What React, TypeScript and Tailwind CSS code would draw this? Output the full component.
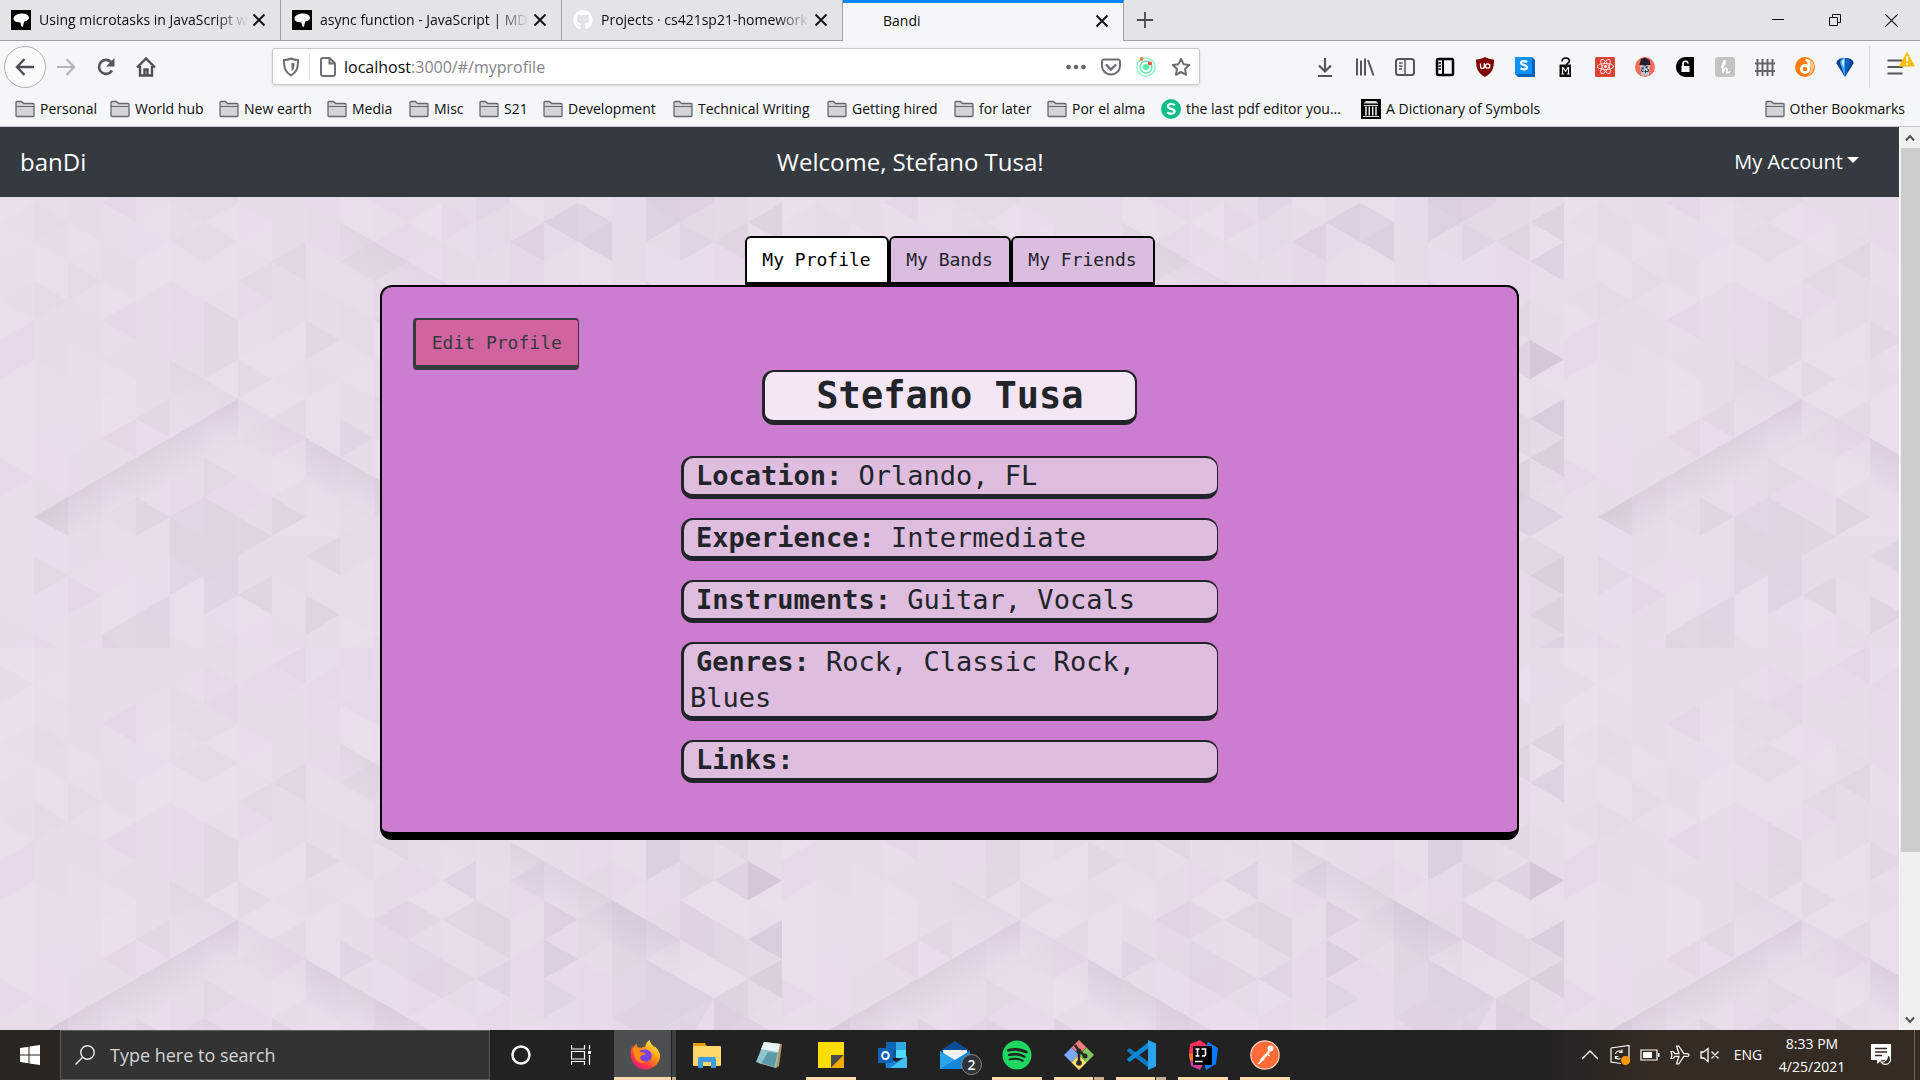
import { useState } from "react";
import type { ReactNode } from "react";
import { FaGithub, FaReact, FaRecycle, FaSpotify } from "react-icons/fa";

/* ---------- triangle wallpaper ---------- */

const TILE_W = 782;
const TILE_H = 521;
const COL = 34;
const HALF = 19.63;

const px = (k: number) => k * COL;
const py = (j: number) => j * HALF - 22.6;

type Facet = [number, number[]];

// Each facet is a depth followed by column/row grid pairs.
const FACETS: Facet[] = [
  [2, [2, 8, 3, 9, 2, 10]],
  [1, [1, 9, 2, 10, 1, 11]],
  [3, [6, 10, 7, 11, 7, 13, 6, 14]],
  [3, [7, 9, 8, 8, 8, 10]],
  [3, [8, 8, 9, 7, 9, 9]],
  [2, [3, 11, 4, 10, 4, 12]],
  [2, [7, 13, 8, 14, 7, 15]],
  [3, [4, 16, 5, 15, 5, 17]],
  [2, [3, 17, 4, 16, 4, 18]],
  [3, [8, 16, 9, 15, 9, 17]],
  [2, [0, 18, 1, 19, 0, 20]],
  [2, [0, 12, 1, 11, 1, 13, 0, 14]],
  [4, [1, 21, 2, 20, 2, 22]],
  [3, [6, 18, 7, 19, 6, 20]],
  [4, [4, 20, 5, 21, 4, 22]],
  [4, [5, 21, 6, 20, 8, 22, 5, 25]],
  [5, [8, 20, 9, 21, 8, 22]],
  [3, [1, 23, 2, 24, 1, 25]],
  [2, [2, 24, 3, 25, 2, 26]],
  [5, [7, 25, 8, 24, 8, 26]],
  [4, [6, 24, 7, 23, 7, 25, 6, 26]],
  [5, [9, 25, 10, 26, 9, 27]],
  [4, [9, 23, 10, 22, 10, 24]],
  [4, [4, 26, 5, 25, 5, 29, 4, 29]],
  [4, [3, 27, 4, 26, 4, 29, 3, 29]],
  [2, [1, 27, 2, 28, 2, 29, 1, 29]],
  [6, [22, 8, 23, 7, 23, 9]],
  [5, [22, 6, 21, 7, 22, 8]],
  [3, [22, 6, 23, 5, 23, 7]],
  [6, [22, 12, 23, 13, 22, 14]],
  [6, [22, 16, 23, 15, 23, 17]],
  [6, [22, 18, 23, 17, 23, 19]],
  [5, [21, 19, 22, 18, 22, 20, 21, 21]],
  [4, [21, 21, 22, 20, 23, 21, 22, 22]],
  [6, [22, 24, 23, 23, 23, 25]],
  [4, [21, 23, 22, 22, 23, 23, 22, 24]],
  [4, [22, 26, 23, 25, 23, 27]],
  [6, [22, 28, 23, 27, 23, 29]],
  [3, [21, 11, 22, 10, 22, 12]],
  [3, [9, 11, 10, 12, 9, 13]],
  [4, [11, 11, 12, 10, 12, 12]],
  [5, [13, 13, 14, 12, 14, 14]],
  [3, [15, 13, 16, 12, 16, 14]],
  [5, [19, 9, 20, 10, 20, 12, 19, 13]],
  [5, [20, 12, 21, 13, 20, 14]],
  [5, [21, 13, 22, 12, 23, 13, 22, 14]],
  [4, [20, 14, 22, 16, 22, 18, 20, 16]],
  [4, [13, 15, 14, 14, 15, 15, 15, 17]],
  [5, [16, 14, 17, 15, 16, 16]],
  [5, [16, 16, 17, 17, 16, 18]],
  [4, [16, 18, 17, 19, 16, 20]],
  [3, [11, 17, 12, 16, 14, 18, 13, 19]],
  [4, [10, 16, 11, 17, 10, 18]],
  [3, [11, 15, 12, 14, 13, 15, 12, 16]],
  [5, [14, 18, 15, 17, 15, 19]],
  [4, [18, 14, 19, 15, 19, 17, 21, 19, 20, 22, 18, 20]],
  [4, [15, 7, 16, 6, 16, 8]],
  [5, [16, 6, 17, 5, 18, 6, 18, 8]],
  [5, [19, 3, 21, 3, 21, 5, 19, 7]],
  [4, [20, 6, 21, 7, 20, 8]],
  [4, [14, 4, 15, 3, 15, 5, 14, 6]],
  [3, [10, 8, 11, 7, 12, 8, 11, 9]],
  [3, [8, 2, 9, 1, 9, 3]],
  [2, [6, 4, 7, 3, 7, 5]],
  [2, [3, 5, 4, 4, 4, 6]],
  [2, [10, 4, 11, 3, 11, 5]],
  [1, [5, 5, 6, 4, 7, 5, 7, 7, 6, 8, 5, 7]],
  [1, [1, 5, 2, 6, 2, 8, 1, 7]],
];

// Facets that stay bright.
const LIGHTS: number[][] = [
  [9, 15, 10, 14, 10, 18, 9, 17],
  [19, 17, 20, 16, 22, 18, 21, 19],
  [13, 13, 14, 14, 13, 15, 12, 14],
  [6, 14, 7, 13, 7, 15],
  [7, 13, 9, 11, 9, 13, 8, 14],
  [6, 6, 7, 5, 7, 7],
  [10, 6, 11, 5, 11, 7],
  [9, 21, 10, 22, 8, 22],
  [20, 14, 21, 13, 22, 14, 23, 15, 22, 16],
  [22, 8, 22, 6, 23, 7],
  [5, 25, 6, 24, 6, 28, 5, 27],
];

// Soft folds: dark along one ridge, fading out at right angles to it.
const SHADOWS: { id: string; o: number; pts: number[]; from: number[]; to: number[] }[] = [
  { id: "s1", o: 0.1, pts: [1, 21, 7, 15, 7, 18, 4, 21, 2, 22], from: [4, 18], to: [4.6, 19.8] },
  { id: "s2", o: 0.1, pts: [9, 17, 14, 22, 14, 25, 9, 20], from: [10, 18], to: [9.4, 19.8] },
  { id: "s3", o: 0.05, pts: [5, 13, 9, 17, 9, 20, 5, 16], from: [7, 15], to: [6.4, 16.8] },
  { id: "s4", o: 0.09, pts: [15, 11, 20, 16, 20, 19, 15, 14], from: [17, 13], to: [16.4, 14.8] },
  { id: "s5", o: 0.06, pts: [10, 6, 14, 10, 14, 13, 10, 9], from: [11, 7], to: [10.4, 8.8] },
];

const toPoints = (p: number[]) => {
  const out: string[] = [];
  for (let i = 0; i < p.length; i += 2) out.push(`${px(p[i])},${py(p[i + 1])}`);
  return out.join(" ");
};

const mesh: { pts: string; o: number }[] = [];
for (let c = 0; c < 23; c++) {
  for (let t = 0; t < 28; t++) {
    const baseLeft = t % 2 === c % 2;
    const b = baseLeft ? c : c + 1;
    const a = baseLeft ? c + 1 : c;
    const n = Math.sin(c * 127.1 + Math.floor(t / 1.4) * 311.7) * 43758.5;
    const r = n - Math.floor(n);
    mesh.push({
      pts: toPoints([b, t, b, t + 2, a, t + 1]),
      o: 0.005 + r * (0.018 + c * 0.0018),
    });
  }
}

function Wallpaper() {
  return (
    <svg className="absolute inset-0 h-full w-full" aria-hidden="true">
      <defs>
        {SHADOWS.map((s) => (
          <linearGradient
            key={s.id}
            id={s.id}
            gradientUnits="userSpaceOnUse"
            x1={px(s.from[0])}
            y1={py(s.from[1])}
            x2={px(s.to[0])}
            y2={py(s.to[1])}
          >
            <stop offset="0" stopColor="#7d6a85" stopOpacity={s.o} />
            <stop offset="1" stopColor="#7d6a85" stopOpacity="0" />
          </linearGradient>
        ))}
        <pattern id="tile" width={TILE_W} height={TILE_H} patternUnits="userSpaceOnUse">
          <rect width={TILE_W} height={TILE_H} fill="#ebdeed" />
          {mesh.map((m, i) => (
            <polygon key={i} points={m.pts} fill="#75687d" fillOpacity={m.o} />
          ))}
          {FACETS.map(([d, p], i) => (
            <polygon key={i} points={toPoints(p)} fill="#75687d" fillOpacity={d * 0.016} />
          ))}
          {LIGHTS.map((p, i) => (
            <polygon key={i} points={toPoints(p)} fill="#ebdeed" fillOpacity="0.85" />
          ))}
          {SHADOWS.map((s) => (
            <polygon key={s.id} points={toPoints(s.pts)} fill={`url(#${s.id})`} />
          ))}
        </pattern>
      </defs>
      <rect width="100%" height="100%" fill="url(#tile)" />
    </svg>
  );
}

/* ---------- small icons ---------- */

function Svg({ children, className = "size-5", box = "0 0 20 20" }: { children: ReactNode; className?: string; box?: string }) {
  return (
    <svg viewBox={box} className={`${className} shrink-0`} fill="none" aria-hidden="true">
      {children}
    </svg>
  );
}

const MdnIcon = () => (
  <Svg>
    <rect width="20" height="20" fill="#000" />
    <path d="M2.500 8.500C3 5 7 3.500 11 3.500c4 0 6.500 1.500 7 4 .2 2-1.500 3.300-4 3.500-1 .5-1 1.500-1.500 3L12 17l-2-1-.5-3.500L6 12c-2.500-.5-3.500-1.500-3.500-3.500z" fill="#fff" />
  </Svg>
);

const CloseIcon = () => (
  <Svg className="size-[14px]" box="0 0 14 14">
    <path d="M1.500 1.500l11 11M12.500 1.500l-11 11" stroke="#15141a" strokeWidth="2" />
  </Svg>
);

const FolderIcon = () => (
  <Svg>
    <path d="M1 3.500a1 1 0 011-1h4.500l2 2H18a1 1 0 011 1v11a1 1 0 01-1 1H2a1 1 0 01-1-1z" fill="#d3d4d6" stroke="#68686b" strokeWidth="1.300" />
    <path d="M1 7.500h18" stroke="#68686b" />
  </Svg>
);

/* ---------- browser chrome ---------- */

const TABS = [
  { title: "Using microtasks in JavaScript with", icon: <MdnIcon /> },
  { title: "async function - JavaScript | MDN Web", icon: <MdnIcon /> },
  { title: "Projects · cs421sp21-homework-team", icon: <FaGithub className="size-5 shrink-0 text-white" /> },
  { title: "Bandi", icon: <span className="size-5 shrink-0" />, active: true },
];

function TabStrip() {
  return (
    <div className="flex h-[41px] bg-[#e3e4e6]">
      <div role="tablist" className="flex">
        {TABS.map((t) => (
          <div
            key={t.title}
            className={
              t.active
                ? "flex w-[281px] items-center border-t-[3px] border-r border-r-[#a0a0a4] border-t-[#0a84ff] bg-[#f5f6f7] pb-[3px] pl-3 pr-[14px]"
                : "flex w-[281px] items-center border-r border-b border-[#a0a0a4] pl-[11px] pr-[14px]"
            }
          >
            <button role="tab" aria-selected={!!t.active} className="flex min-w-0 flex-1 items-center gap-2 text-left">
              {t.icon}
              <span
                className={
                  t.active
                    ? "block text-sm whitespace-nowrap"
                    : "block min-w-0 flex-1 overflow-hidden text-sm whitespace-nowrap [mask-image:linear-gradient(to_right,black_84%,transparent)]"
                }
              >
                {t.title}
              </span>
            </button>
            <button aria-label="Close tab" className="ml-1">
              <CloseIcon />
            </button>
          </div>
        ))}
      </div>
      <div className="flex flex-1 items-center justify-between border-b border-[#a0a0a4] pl-3">
        <button aria-label="New tab">
          <Svg className="size-[18px]">
            <path d="M10 1v18M1 10h18" stroke="#4a4a4f" strokeWidth="2" />
          </Svg>
        </button>
        <div className="flex">
          <button aria-label="Minimize" className="grid w-[57px] place-items-center">
            <Svg className="size-3" box="0 0 12 12">
              <path d="M0 5.500h12" stroke="#111" />
            </Svg>
          </button>
          <button aria-label="Restore" className="grid w-[57px] place-items-center">
            <Svg className="size-3" box="0 0 12 12">
              <path d="M.5 3.500h8v8h-8zM3.500 3.500v-3h8v8h-3" stroke="#111" />
            </Svg>
          </button>
          <button aria-label="Close" className="grid w-[57px] place-items-center">
            <Svg className="size-[13px]" box="0 0 12 12">
              <path d="M0 0l12 12M12 0L0 12" stroke="#111" />
            </Svg>
          </button>
        </div>
      </div>
    </div>
  );
}

const EXTENSIONS: { name: string; art: ReactNode }[] = [
  { name: "Downloads", art: <path d="M10 1v13M4 8.500l6 6 6-6M3 19h14" stroke="#56565a" strokeWidth="2.200" /> },
  { name: "Library", art: <path d="M2 1.500v17M6 3.500v15M10 1.500v17M13 3l5.500 15.500" stroke="#56565a" strokeWidth="2" /> },
  {
    name: "Sidebars",
    art: (
      <>
        <rect x="1" y="2" width="18" height="16" rx="2.500" stroke="#56565a" strokeWidth="2" />
        <path d="M10 2v16M4 6h3.500M4 9h3.500M4 12h3" stroke="#56565a" strokeWidth="1.500" />
      </>
    ),
  },
  {
    name: "Reader sidebar",
    art: (
      <>
        <rect x="2" y="2" width="16" height="16" rx="1.500" stroke="#000" strokeWidth="2.500" />
        <path d="M8 2v16" stroke="#000" strokeWidth="2" />
        <path d="M3.500 6H6M3.500 9H6M3.500 12H6" stroke="#000" strokeWidth="1.500" />
      </>
    ),
  },
  {
    name: "Ad blocker",
    art: (
      <>
        <path d="M10 0c2.500 1.600 5.500 2.500 9 2.500 0 8-1 13-9 17.500C2 15.500 1 10.500 1 2.500 4.500 2.500 7.500 1.600 10 0z" fill="#800000" />
        <path d="M5.500 6.500v3a1.900 1.900 0 003.800 0v-3M9.300 6v5" stroke="#fff" strokeWidth="1.300" />
        <circle cx="12.700" cy="9" r="2.200" stroke="#fff" strokeWidth="1.300" />
      </>
    ),
  },
  {
    name: "Stylus",
    art: (
      <>
        <path d="M0 0h17l3 3v17H3l-3-3z" fill="#0a63b8" />
        <path d="M0 0h17v17H0z" fill="#0d92ff" />
        <path d="M12 5.200C11 4 6.200 3.500 6 6c0 2.600 6.200 1.600 6 4.400-.2 2.600-5 2.300-6.500.8" stroke="#fff" strokeWidth="2.200" />
      </>
    ),
  },
  {
    name: "Lock",
    art: (
      <>
        <path d="M7 4.500C7 0 14.500 0 14.500 4c0 2-3 2-3 4.500" stroke="#000" strokeWidth="1.600" />
        <rect x="4.500" y="7.500" width="11.500" height="12.500" fill="#111" />
        <path d="M6.500 17h2.500M12 17h2.500M7.500 17v-6.500h.5l2.500 4 2.500-4h.5V17" stroke="#fff" strokeWidth="1.100" />
      </>
    ),
  },
  { name: "React tools", art: <rect width="20" height="20" rx="1.500" fill="#dc4337" /> },
  {
    name: "Cookie cleaner",
    art: (
      <>
        <circle cx="10" cy="10" r="10" fill="#fc6c5d" />
        <path d="M4.500 8L6 2l4-1.500L14.500 3l1 5z" fill="#23202a" />
        <path d="M5 8.500h10l-1.200 10h-7.600z" fill="#b9c6d4" />
      </>
    ),
  },
  {
    name: "Password vault",
    art: (
      <>
        <path d="M19 0v20h-8C5 20 1 15.500 1 10S5 0 11 0z" fill="#000" />
        <rect x="6.500" y="9" width="8" height="6" fill="#fff" />
        <path d="M8 9.500V7a2.500 2.500 0 015-.5" stroke="#fff" strokeWidth="1.700" />
      </>
    ),
  },
  {
    name: "Coupons",
    art: (
      <>
        <rect width="20" height="20" rx="3" fill="#c3c3c3" />
        <path d="M6 10c3-1 5-5 3.500-6S7.500 9 8 16c.5-3.500 3.500-6.500 4-4s-1 4 .5 4 2-1 2.500-2" stroke="#fff" strokeWidth="1.600" />
      </>
    ),
  },
  {
    name: "Fence",
    art: <path d="M2.500 19V2M7.500 19V2M12.500 19V2M17.500 19V2M0 6.500h20M0 14h20" stroke="#66666a" strokeWidth="2" />,
  },
  {
    name: "Converter",
    art: (
      <>
        <circle cx="10" cy="10" r="10" fill="#ff7b0d" />
        <path d="M13 1.500c4 1.500 6.500 5 6 9-.5 4-3 7-6.500 8.500 3-3 3.500-6 2.500-10z" fill="#ffc48a" />
        <circle cx="10" cy="12" r="3.700" stroke="#fff" strokeWidth="2.800" />
        <path d="M13.700 12.500V4.500l-3-2" stroke="#fff" strokeWidth="2.600" />
      </>
    ),
  },
  {
    name: "Wallet",
    art: (
      <>
        <path d="M10 20L1.500 6.500C1 3 5 1 10 1s9 2 8.500 5.500z" fill="#0f3f8f" />
        <path d="M10 20L5 6c0-3 2-5 5-5z" fill="#3aa5f5" />
        <path d="M10 20V1c3 0 5 2 5 5z" fill="#0b61c4" />
        <path d="M8.500 11L6.500 5c.3-1.500 1.300-2.800 3-3z" fill="#d6eeff" />
      </>
    ),
  },
];

function NavToolbar() {
  return (
    <div className="flex h-[51px] items-center bg-[#f5f6f7]">
      <div className="flex w-[272px] items-center pl-1">
        <button aria-label="Back" className="grid size-[42px] place-items-center rounded-full border border-[#b1b1b3] bg-[#fbfbfb]">
          <Svg>
            <path d="M19 10H2M9.500 2L2 10l7.500 8" stroke="#4f4f53" strokeWidth="2.400" />
          </Svg>
        </button>
        <button aria-label="Forward" className="grid w-10 place-items-center">
          <Svg>
            <path d="M1 10h17M10.500 2l7.500 8-7.500 8" stroke="#b5b5b7" strokeWidth="2.200" />
          </Svg>
        </button>
        <button aria-label="Reload" className="grid w-10 place-items-center">
          <Svg>
            <path d="M16 13.500A7 7 0 1115 5" stroke="#56565a" strokeWidth="2.600" />
            <path d="M18.500 1v8.500H10z" fill="#56565a" />
          </Svg>
        </button>
        <button aria-label="Home" className="grid w-10 place-items-center">
          <Svg>
            <path d="M1 10.500l9-9 9 9M4 9v9.500h12V9M8.500 18v-5.500h3V18" stroke="#4f4f53" strokeWidth="2.400" />
          </Svg>
        </button>
      </div>
      <div className="flex h-[37px] w-[928px] items-center rounded-[3px] border border-[#c9c9cc] bg-white px-2 shadow-sm">
        <Svg>
          <path d="M10 1.500c2 1 4.500 1.500 7 1.500 0 8-1 12-7 15.500C4 15 3 11 3 3c2.500 0 5-.5 7-1.500z" stroke="#6f6f73" strokeWidth="2" />
          <path d="M10.500 5.500v9c2.500-2 3-4.500 3-8.200z" fill="#6f6f73" />
        </Svg>
        <span className="mx-2 h-[26px] w-px bg-[#dcdcde]" />
        <Svg>
          <path d="M3 3a2 2 0 012-2h6.500L17 6.500V17a2 2 0 01-2 2H5a2 2 0 01-2-2zM11.500 1v5.500H17" stroke="#6f6f73" strokeWidth="2" />
        </Svg>
        <div className="ml-1.5 flex-1 text-base text-[#85858a]">
          <span className="text-[#0c0c0d]">localhost</span>:3000/#/myprofile
        </div>
        <div className="flex gap-[15px]">
          <button aria-label="Page actions">
            <Svg>
              <circle cx="2.500" cy="10" r="2.300" fill="#66666a" />
              <circle cx="10" cy="10" r="2.300" fill="#66666a" />
              <circle cx="17.500" cy="10" r="2.300" fill="#66666a" />
            </Svg>
          </button>
          <button aria-label="Save to Pocket">
            <Svg>
              <path d="M3 2.500h14a2 2 0 012 2V9a9 8.500 0 01-18 0V4.500a2 2 0 012-2z" stroke="#6f6f73" strokeWidth="2" />
              <path d="M5.500 8l4.500 4.500L14.500 8" stroke="#6f6f73" strokeWidth="2.400" strokeLinecap="round" />
            </Svg>
          </button>
          <button aria-label="React developer tools">
            <Svg>
              <circle cx="10" cy="10" r="9.200" stroke="#8df0c0" strokeWidth="1.300" />
              <circle cx="10" cy="10" r="6" stroke="#5fe8b0" strokeWidth="1.300" />
              <circle cx="10" cy="10" r="3" fill="#4cf0a8" />
              <circle cx="5.500" cy="2" r="1.900" fill="#f0813a" />
              <circle cx="14" cy="6.500" r="2" fill="#e8503a" />
            </Svg>
          </button>
          <button aria-label="Bookmark this page">
            <Svg>
              <path d="M10 1.800l2.500 5.400 5.800.7-4.300 4 1.100 5.900L10 15l-5.100 2.800L6 11.900l-4.300-4 5.800-.7z" stroke="#6f6f73" strokeWidth="2" strokeLinejoin="round" />
            </Svg>
          </button>
        </div>
      </div>
      <div className="ml-auto flex items-center">
        {EXTENSIONS.map((e) => (
          <button key={e.name} aria-label={e.name} className="relative grid w-10 place-items-center">
            <Svg>{e.art}</Svg>
            {e.name === "React tools" && <FaReact className="absolute size-[17px] text-white" />}
            {e.name === "Cookie cleaner" && <FaRecycle className="absolute mt-1 size-[8px] text-[#2c3e50]" />}
          </button>
        ))}
        <span className="ml-1 h-[42px] w-px bg-[#d7d7d9]" />
        <button aria-label="Open menu" className="relative grid w-[50px] place-items-center">
          <Svg>
            <path d="M2.500 3.500h15M2.500 10h15M2.500 16.500h15" stroke="#56565a" strokeWidth="2.200" />
          </Svg>
          <Svg className="absolute -top-[6px] right-[5px] size-4">
            <path d="M10 1L19.500 18a1 1 0 01-1 1.500h-17A1 1 0 01.500 18z" fill="#ffbf00" />
            <path d="M10 6.500v6.500M10 15v2.500" stroke="#fff" strokeWidth="2.200" />
          </Svg>
        </button>
      </div>
    </div>
  );
}

const BOOKMARKS: { label: string; w: string; icon?: ReactNode }[] = [
  { label: "Personal", w: "w-[95px]" },
  { label: "World hub", w: "w-[109px]" },
  { label: "New earth", w: "w-[108px]" },
  { label: "Media", w: "w-[82px]" },
  { label: "Misc", w: "w-[70px]" },
  { label: "S21", w: "w-[64px]" },
  { label: "Development", w: "w-[130px]" },
  { label: "Technical Writing", w: "w-[154px]" },
  { label: "Getting hired", w: "w-[127px]" },
  { label: "for later", w: "w-[93px]" },
  { label: "Por el alma", w: "w-[114px]" },
  {
    label: "the last pdf editor you...",
    w: "w-[200px]",
    icon: (
      <Svg>
        <circle cx="10" cy="10" r="10" fill="#10be8a" />
        <path d="M13.800 6.300C12.500 4.500 6.800 4.300 6.800 7.300c0 3.200 7 1.900 6.800 5.200-.2 3-5.800 2.700-7.400.8" stroke="#fff" strokeWidth="2.200" />
      </Svg>
    ),
  },
  {
    label: "A Dictionary of Symbols",
    w: "w-[200px]",
    icon: (
      <Svg>
        <rect width="20" height="20" fill="#000" />
        <path d="M2.500 4.500L5 2h10l2.500 2.500z" fill="#ddd" />
        <path d="M3 6.500h14M2 17.500h16" stroke="#ddd" strokeWidth="1.200" />
        <path d="M5 7.500v9M8.300 7.500v9M11.700 7.500v9M15 7.500v9" stroke="#eee" strokeWidth="1.500" />
      </Svg>
    ),
  },
];

function BookmarksBar() {
  return (
    <div className="flex h-[35px] items-center border-b border-[#c4c8cb] bg-[#f5f6f7] px-[15px] text-sm text-[#0c0c0d]">
      {BOOKMARKS.map((b) => (
        <a key={b.label} href="#" className={`${b.w} flex shrink-0 items-center gap-[5px] whitespace-nowrap`}>
          {b.icon ?? <FolderIcon />}
          {b.label}
        </a>
      ))}
      <a href="#" className="ml-auto flex items-center gap-[5px] whitespace-nowrap">
        <FolderIcon />
        Other Bookmarks
      </a>
    </div>
  );
}

/* ---------- page ---------- */

const PROFILE = [
  { label: "Location:", value: "Orlando, FL" },
  { label: "Experience:", value: "Intermediate" },
  { label: "Instruments:", value: "Guitar, Vocals" },
  { label: "Genres:", value: "Rock, Classic Rock, Blues" },
  { label: "Links:", value: "" },
];

const PAGE_TABS = [
  { name: "My Profile", w: "w-36" },
  { name: "My Bands", w: "w-[122px]" },
  { name: "My Friends", w: "w-36" },
];

function Page() {
  const [tab, setTab] = useState("My Profile");
  return (
    <div className="relative min-w-0 flex-1 overflow-hidden bg-[#e8dbea]">
      <Wallpaper />
      <div className="relative">
        <nav className="flex h-[70px] items-center justify-between bg-[#343a40] px-5 text-white">
          <a href="#" className="mr-5 text-2xl">
            banDi
          </a>
          <span className="text-2xl">Welcome, Stefano Tusa!</span>
          <button className="flex items-center gap-1 px-5 text-xl">
            My Account
            <Svg className="mb-1 h-[6px] w-3" box="0 0 12 6">
              <path d="M0 0h12L6 6z" fill="#fff" />
            </Svg>
          </button>
        </nav>
        <main className="pt-[39px] font-['DejaVu_Sans_Mono',monospace] text-[#212529]">
          <div role="tablist" className="flex justify-center text-lg">
            {PAGE_TABS.map((t) => (
              <button
                key={t.name}
                role="tab"
                aria-selected={tab === t.name}
                onClick={() => setTab(t.name)}
                className={`${t.w} ${
                  tab === t.name ? "bg-white text-black" : "bg-[#dabddf]"
                } h-[49px] rounded-t-md border-2 border-b-[3px] border-black`}
              >
                {t.name}
              </button>
            ))}
          </div>
          <section className="mx-auto w-3/5 rounded-xl border-2 border-b-8 border-black bg-[#cd7dcf] px-[31px] pt-[31px] pb-[49px]">
            <button className="block h-[52px] w-[166px] rounded border-t-2 border-r border-b-[5px] border-l-[3px] border-[#343a40] bg-[#d1649e] text-lg text-[#343a40]">
              Edit Profile
            </button>
            <h1 className="mx-auto w-[375px] rounded-xl border-2 border-b-[5px] border-l-[3px] border-[#212529] bg-[#f5e6f5] text-center text-[37px] leading-[48px] font-bold">
              Stefano Tusa
            </h1>
            <div className="mx-auto mt-[31px] flex w-[537px] flex-col gap-[19px]">
              {PROFILE.map((p) => (
                <p
                  key={p.label}
                  className="rounded-xl border-t-2 border-r border-b-[5px] border-l-[3px] border-[#212529] bg-[#debddf] px-[6px] text-[27px] leading-9"
                >
                  <b className="ml-[6px]">{p.label}</b> {p.value}
                </p>
              ))}
            </div>
          </section>
        </main>
      </div>
    </div>
  );
}

function Scrollbar() {
  return (
    <div className="flex w-[21px] flex-col items-center border-l border-white bg-[#f0f0f0]">
      <button aria-label="Scroll up" className="grid h-[21px] w-full place-items-center">
        <Svg className="size-[10px]" box="0 0 10 10">
          <path d="M1 7.500l4-4.500 4 4.500" stroke="#505050" strokeWidth="2" />
        </Svg>
      </button>
      <div className="h-[78%] w-[19px] bg-[#cdcdcd]" />
      <button aria-label="Scroll down" className="mt-auto grid h-[21px] w-full place-items-center">
        <Svg className="size-[10px]" box="0 0 10 10">
          <path d="M1 2.500L5 7l4-4.500" stroke="#505050" strokeWidth="2" />
        </Svg>
      </button>
    </div>
  );
}

/* ---------- taskbar ---------- */

type AppEntry = { name: string; open?: "one" | "many" | "active"; art: ReactNode };

const APPS: AppEntry[] = [
  {
    name: "Firefox",
    open: "active",
    art: (
      <>
        <defs>
          <linearGradient id="fx" x1="26" y1="2" x2="6" y2="28" gradientUnits="userSpaceOnUse">
            <stop offset="0" stopColor="#fff44f" />
            <stop offset=".4" stopColor="#ff980e" />
            <stop offset=".75" stopColor="#ff3647" />
            <stop offset="1" stopColor="#e31587" />
          </linearGradient>
        </defs>
        <path d="M28.500 11c-1-2.300-2.600-3.800-4.200-4.800.4 1 .6 1.800.7 2.300C23.500 5 20.500 4.500 19.500 0c-3 1.700-4 4.800-4 6.500-1.600.1-3 .6-4.200 1.400-1-.7-1.800-.6-3-.2C7 6.500 6.700 5 6.800 3.800c-2 1-3.300 3-3.800 4.200C2.500 7.500 2.600 6 2.600 5.500 1.200 7.800.5 12 .8 16c.5 7.500 6.800 13.500 14.300 13.500S30 24 30 16c0-2-.6-3.500-1.500-5z" fill="url(#fx)" />
        <path d="M9 11.500c2-1.500 5.500-2.500 8.500-1.500 3.500 1 5 4.500 4 7.500-1.200 3.400-5 4.800-8 3.500-3-1-3.500-3.500-2.500-5 1-1 2.500-.5 3.500-1 1-.6 1.500-1.500 1-2-2-.3-4-.5-6.500-1.500z" fill="#7542e5" />
        <path d="M3 8c2-1 4-.5 5.500.3 1.500.4 2.500 0 3.500.5-1 1-2.500 2-2.300 3.300 1 .8 3.300.4 5 1-.4 2-3 1.800-4.200 3-2 4 3 6.500 6 5.500C13 25 6 22 4.500 17z" fill="#ff8a16" />
      </>
    ),
  },
  {
    name: "File Explorer",
    art: (
      <>
        <path d="M1 3h12l2 3.500H1z" fill="#e39b12" />
        <rect x="1" y="6" width="28" height="20" rx="1" fill="#ffd76b" />
        <path d="M6 28v-9a2 2 0 012-2h14a2 2 0 012 2v9h-5v-6h-8v6z" fill="#3f9be0" />
      </>
    ),
  },
  {
    name: "Notepad",
    art: (
      <>
        <path d="M10 2l18 2-3 22-3 2L4 23z" fill="#b9925a" />
        <path d="M10 2l16 2-4 24L2 22z" fill="#8fc4cc" />
        <path d="M10 2l16 2-2 8L7 9z" fill="#e4f3f4" />
        <path d="M14 12l9.500 1-3 14-13-4z" fill="#5b9aa6" />
      </>
    ),
  },
  {
    name: "Sticky Notes",
    open: "one",
    art: (
      <>
        <path d="M2 2h26v26H2z" fill="#ffdd00" />
        <path d="M15 28V15h13z" fill="#4c4a48" />
        <path d="M15 28h13V15z" fill="#f2a900" />
      </>
    ),
  },
  {
    name: "Outlook",
    art: (
      <>
        <path d="M8 2h20v16H8z" fill="#1066b5" />
        <path d="M18 2h10v8H18z" fill="#32a9e7" />
        <path d="M18 10h10v8H18z" fill="#50d9ff" />
        <path d="M8 10h10v8H8z" fill="#0a5298" />
        <path d="M7 16l11 6 11-6v12H8z" fill="#1b86d6" />
        <path d="M29 16v12H12z" fill="#41bff3" />
        <rect x="0" y="8" width="15" height="15" rx="1" fill="#0f64b8" />
        <ellipse cx="7.500" cy="15.500" rx="3.300" ry="3.600" stroke="#fff" strokeWidth="2" />
      </>
    ),
  },
  {
    name: "Mail",
    art: (
      <>
        <path d="M0 11L15 1l15 10v3H0z" fill="#0d4f96" />
        <path d="M3 10h24v10H3z" fill="#f2f2f2" />
        <path d="M0 11l15 9 15-9v18H0z" fill="#27a5ea" />
        <path d="M0 29l30-18v18z" fill="#1587d8" />
      </>
    ),
  },
  { name: "Spotify", open: "one", art: null },
  {
    name: "Git",
    open: "many",
    art: (
      <>
        <path d="M15 0l7.500 7.500L15 14 7.500 7.500z" fill="#f27c7c" />
        <path d="M7.500 7.500L15 15l-7.500 7.500L0 15z" fill="#7ba8f5" />
        <path d="M22.500 7.500L30 15l-7.500 7.500L15 15z" fill="#7fc75f" />
        <path d="M15 15l7.500 7.500L15 30l-7.500-7.500z" fill="#ffdf6b" />
        <path d="M11 5l4 6v12M15 11l6 5" stroke="#2a2a2a" strokeWidth="2.500" />
        <circle cx="15" cy="11" r="2.500" fill="#2a2a2a" />
        <circle cx="21" cy="16" r="2.500" fill="#2a2a2a" />
        <circle cx="15" cy="23" r="2.800" fill="#2a2a2a" />
      </>
    ),
  },
  {
    name: "Visual Studio Code",
    open: "many",
    art: (
      <>
        <path d="M1 10l2.500-2L24 23v6L1.500 11.500z" fill="#0a79c4" />
        <path d="M1 20l2.500 2L24 7V1L1.500 18.500z" fill="#0a8ad8" />
        <path d="M22 0l8 3.500v23L22 30z" fill="#2ba3ee" />
      </>
    ),
  },
  {
    name: "IntelliJ IDEA",
    open: "one",
    art: (
      <>
        <path d="M2 4L12 0l8 6-6 10L1 15z" fill="#fe315d" />
        <path d="M20 2l10 6-2 16-10 6-4-14z" fill="#087cfa" />
        <path d="M1 14l8-2 7 10-4 8-9-4z" fill="#d03fa5" />
        <path d="M1 14l5-1v9l-4-2z" fill="#f97a12" />
        <rect x="5" y="6" width="19" height="19" fill="#000" />
        <path d="M7 21.500h7.500" stroke="#fff" strokeWidth="1.500" />
        <path d="M7.500 9h4M9.500 9v7M7.500 16h4M13.500 9h4v5.500c0 1.500-2 2-3.500 1" stroke="#fff" strokeWidth="1.600" />
      </>
    ),
  },
  {
    name: "Postman",
    open: "one",
    art: (
      <>
        <circle cx="15" cy="15" r="14.200" fill="#ff6c37" stroke="#fdd5c6" strokeWidth="1.200" />
        <circle cx="20.500" cy="8.500" r="3" fill="#fff" />
        <path d="M18.500 10.500l1.500 2-6.500 7-4 3.500 1-4z" fill="#fff" />
        <path d="M8 24l6-5M17 14l3 2" stroke="#fff" strokeWidth="1.200" />
      </>
    ),
  },
];

function TaskButton({ app }: { app: AppEntry }) {
  const active = app.open === "active";
  return (
    <button aria-label={app.name} className="relative grid w-[62px] place-items-center">
      {active && (
        <span className="absolute inset-0 flex gap-px">
          <span className="flex-1 border-b-[3px] border-[#fcd7b0] bg-[#4d4f50]" />
          <span className="w-1 border-b-[3px] border-[#c8ae92] bg-[#3c4042]" />
        </span>
      )}
      {app.name === "Spotify" ? (
        <FaSpotify className="size-[30px] text-[#1ed760]" />
      ) : (
        <Svg className="relative size-[30px]" box="0 0 30 30">
          {app.art}
        </Svg>
      )}
      {app.name === "Mail" && (
        <span className="absolute right-1 bottom-[5px] grid size-[21px] place-items-center rounded-full border border-[#8a8a8a] bg-[#2d3338] text-sm leading-none font-semibold text-white">
          2
        </span>
      )}
      {app.open === "one" && <span className="absolute inset-x-[6px] bottom-0 h-[3px] bg-[#fcd7b0]" />}
      {app.open === "many" && (
        <span className="absolute inset-x-[6px] bottom-0 flex h-[3px] gap-px">
          <span className="flex-1 bg-[#fcd7b0]" />
          <span className="w-[10px] bg-[#c8ae92]" />
        </span>
      )}
    </button>
  );
}

function Taskbar() {
  return (
    <footer className="flex h-[50px] shrink-0 bg-[linear-gradient(to_right,#2b2622_0px,#222222_500px,#222222_80%,#352b23_86%,#352b23)] text-white">
      <button aria-label="Start" className="grid w-[60px] place-items-center">
        <Svg>
          <path d="M0 3l8.500-1.200v7.700H0zM9.500 1.600L20 0v9.500H9.500zM0 10.500h8.500v7.700L0 17zM9.500 10.500H20V20L9.500 18.400z" fill="#fff" />
        </Svg>
      </button>
      <label className="flex w-[430px] items-center gap-[15px] border border-[#5c5c5c] bg-[#333] pl-[14px]">
        <Svg>
          <circle cx="12.500" cy="7.500" r="6.700" stroke="#eee" strokeWidth="1.400" />
          <path d="M7.700 12.300L.5 19.500" stroke="#eee" strokeWidth="1.400" />
        </Svg>
        <input
          type="text"
          aria-label="Search"
          placeholder="Type here to search"
          className="min-w-0 flex-1 bg-transparent text-lg outline-none placeholder:text-[#d4d4d4]"
        />
      </label>
      <button aria-label="Cortana" className="grid w-[62px] place-items-center">
        <Svg>
          <circle cx="10" cy="10" r="8.500" stroke="#fff" strokeWidth="2.500" />
        </Svg>
      </button>
      <button aria-label="Task View" className="grid w-[62px] place-items-center pr-1">
        <Svg>
          <path d="M.5 0v4h13V0M.5 20v-3.500h13V20M.5 6.500h13v7.500H.5zM18.500 0v4.500M18.500 10v10" stroke="#fff" strokeWidth="1.200" />
          <path d="M17 6h3v3h-3z" fill="#fff" />
        </Svg>
      </button>
      {APPS.map((a) => (
        <TaskButton key={a.name} app={a} />
      ))}
      <div className="ml-auto flex items-center">
        <button aria-label="Show hidden icons" className="grid w-[30px] place-items-center">
          <Svg className="size-4" box="0 0 16 16">
            <path d="M0 12l8-8 8 8" stroke="#fff" strokeWidth="1.400" />
          </Svg>
        </button>
        <button aria-label="Updates" className="grid w-[30px] place-items-center">
          <Svg>
            <path d="M1 3l18-2.500v17M1 3v14l10 1.500" stroke="#fff" strokeWidth="1.200" />
            <path d="M5.500 9c.5-3.500 5-4 6.500-1.500M12 4.500v3H9M5.500 14v-2.500h3M5.500 12c1 2 3.500 2.500 5 1.500" stroke="#fff" strokeWidth="1.200" />
            <circle cx="15.500" cy="15.500" r="4.500" fill="#ff9800" />
          </Svg>
        </button>
        <button aria-label="Battery" className="grid w-[30px] place-items-center">
          <Svg>
            <path d="M1 5h16v10H1z" stroke="#fff" strokeWidth="1.200" />
            <path d="M3 7h9v6H3zM18 8h1.500v4H18z" fill="#fff" />
          </Svg>
        </button>
        <button aria-label="Airplane mode" className="grid w-[30px] place-items-center">
          <Svg>
            <path d="M1 6.500h2L5 8.700h4L6.500 1h2.300l5 7.700H18c1.300.5 1.300 2.100 0 2.600h-4.200l-5 7.700H6.500L9 11.300H5L3 13.500H1L2 10z" stroke="#fff" strokeWidth="1.200" />
          </Svg>
        </button>
        <button aria-label="Volume muted" className="grid w-[30px] place-items-center">
          <Svg>
            <path d="M1 7h2.500L8 3.500v13L3.500 13H1zM11.500 6.500l7 7M18.500 6.500l-7 7" stroke="#fff" strokeWidth="1.300" />
          </Svg>
        </button>
        <button className="mr-[5px] w-[46px] text-center text-sm">ENG</button>
        <button className="flex w-[72px] flex-col items-center text-sm leading-[23px] whitespace-nowrap">
          <span>8:33 PM</span>
          <span>4/25/2021</span>
        </button>
        <button aria-label="Notifications" className="grid w-[66px] place-items-center">
          <Svg className="size-[22px]" box="0 0 22 22">
            <path d="M1 0h20v16h-9l-5 4v-4H1z" fill="#fff" />
            <path d="M5 4.500h12M5 8h12M5 11.500h7" stroke="#352b23" strokeWidth="1.300" />
            <path d="M17.500 10.500a5.200 5.200 0 11-6.500 7.500c3.500.8 7-2.500 6.500-7.500z" fill="#352b23" stroke="#fff" strokeWidth="1.200" />
          </Svg>
        </button>
        <span className="mr-[5px] h-[50px] w-px bg-[#6b625b]" />
      </div>
    </footer>
  );
}

export default function App() {
  return (
    <div className="flex h-screen min-h-[900px] flex-col overflow-hidden font-['Open_Sans',sans-serif] text-[#0c0c0d]">
      <header>
        <TabStrip />
        <NavToolbar />
        <BookmarksBar />
      </header>
      <div className="flex min-h-0 flex-1">
        <Page />
        <Scrollbar />
      </div>
      <Taskbar />
    </div>
  );
}
